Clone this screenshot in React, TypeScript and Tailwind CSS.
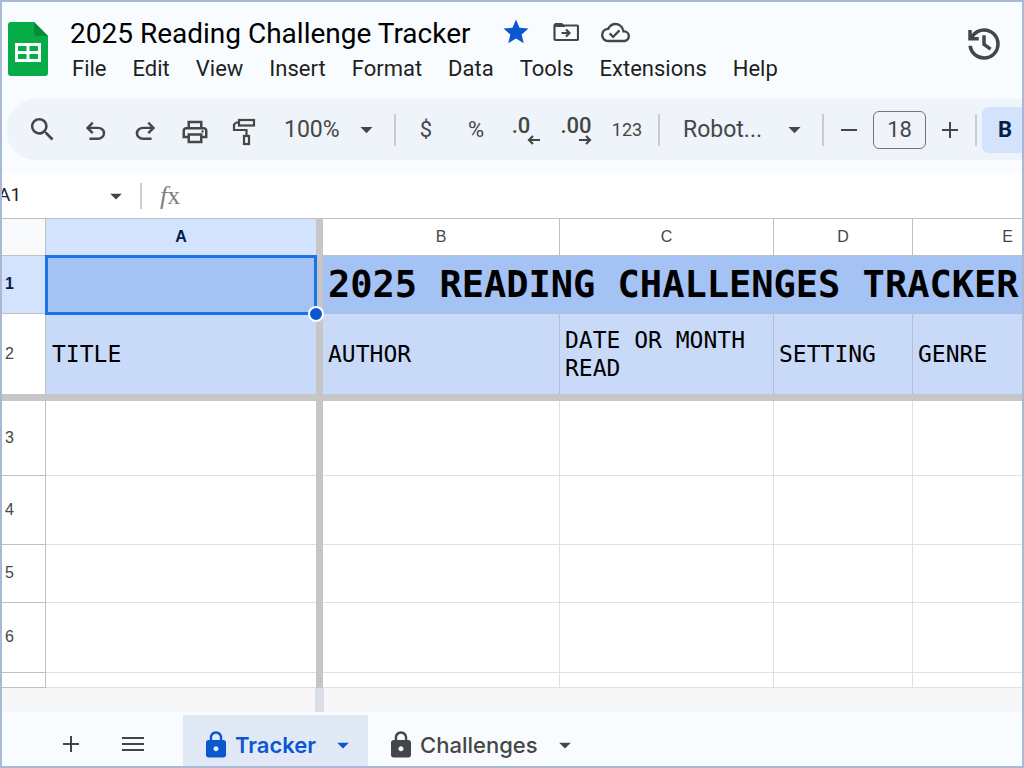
import React from 'react';
import clsx from 'clsx';
import {
  MdArrowDropDown,
  MdLock,
  MdOutlineCloudDone,
  MdSearch,
  MdStar,
} from 'react-icons/md';

const MENUS = ['File', 'Edit', 'View', 'Insert', 'Format', 'Data', 'Tools', 'Extensions', 'Help'];

const EMPTY_ROWS = [
  { label: '3', height: 'h-[75px]' },
  { label: '4', height: 'h-[69px]' },
  { label: '5', height: 'h-[58px]' },
  { label: '6', height: 'h-[70px]' },
  { label: '', height: 'h-[15px]' },
];

const SYMBOLS = {
  undo: 'M280-200v-80h284q63 0 109.500-40T720-420q0-60-46.500-100T564-560H312l104 104-56 56-200-200 200-200 56 56-104 104h252q97 0 169.500 63T800-420q0 94-72.500 157T564-200H280Z',
  redo: 'M396-200q-97 0-169.500-63T154-420q0-94 72.500-157T396-640h252L544-744l56-56 200 200-200 200-56-56 104-104H396q-63 0-109.500 40T240-420q0 60 46.500 100T396-280h284v80H396Z',
  print:
    'M640-640v-120H320v120h-80v-200h480v200h-80Zm80 180q17 0 28.500-11.500T760-500q0-17-11.500-28.500T720-540q-17 0-28.500 11.500T680-500q0 17 11.500 28.500T720-460Zm-80 260v-160H320v160h320Zm80 80H240v-160H80v-240q0-51 35-85.500t85-34.500h560q51 0 85.500 34.500T880-520v240H720v160Zm80-240v-160q0-17-11.500-28.500T760-560H200q-17 0-28.500 11.500T160-520v160h80v-80h480v80h80Z',
  history:
    'M480-120q-138 0-240.500-91.500T122-440h82q14 104 92.500 172T480-200q117 0 198.500-81.500T760-480q0-117-81.500-198.500T480-760q-69 0-129 32t-101 88h110v80H120v-240h80v94q51-64 124.500-99T480-840q75 0 140.500 28.500t114 77q48.500 48.500 77 114T840-480q0 75-28.500 140.500t-77 114q-48.500 48.500-114 77T480-120ZM608-330L440-450v-230h80v190l134 96-46 64Z',
};

const Symbol: React.FC<{ name: keyof typeof SYMBOLS; size: number }> = ({ name, size }) => (
  <svg width={size} height={size} viewBox="0 -960 960 960" fill="currentColor" aria-hidden="true">
    <path d={SYMBOLS[name]} />
  </svg>
);

const SheetsLogo: React.FC = () => (
  <svg width="40" height="54" viewBox="0 0 40 54" aria-hidden="true">
    <path d="M3 0h23l14 14v37a3 3 0 0 1-3 3H3a3 3 0 0 1-3-3V3a3 3 0 0 1 3-3z" fill="#06ac47" />
    <path d="M26 0l14 14H29a3 3 0 0 1-3-3z" fill="#078a38" />
    <path
      d="M7 21h26v19H7zM10 24v5h8.500v-5zM21.500 24v5H30v-5zM10 32v5h8.500v-5zM21.500 32v5H30v-5z"
      fill="#fff"
      fillRule="evenodd"
    />
  </svg>
);

const MoveIcon: React.FC = () => (
  <svg width="26" height="20" viewBox="0 0 26 20" fill="none" stroke="currentColor" strokeWidth="2.2" aria-hidden="true">
    <path d="M2 3.500h22a1 1 0 0 1 1 1V17a1 1 0 0 1-1 1H2.500a1 1 0 0 1-1-1V3.500z" />
    <path d="M1 5V2.500A1.500 1.500 0 0 1 2.500 1H9l3 3v1z" fill="currentColor" stroke="none" />
    <path d="M8.500 11h8M13 7.500l3.500 3.500-3.500 3.500" />
  </svg>
);

const PaintIcon: React.FC = () => (
  <svg width="24" height="28" viewBox="0 0 24 28" fill="none" stroke="currentColor" strokeWidth="2.2" aria-hidden="true">
    <rect x="7" y="2" width="15" height="5.500" />
    <path d="M7 4.500H4.500L2 6.500V12h12.500v6" />
    <rect x="12" y="18" width="5" height="8" />
  </svg>
);

const PlusIcon: React.FC<{ size: number }> = ({ size }) => (
  <svg width={size} height={size} viewBox="0 0 16 16" stroke="currentColor" strokeWidth="2" aria-hidden="true">
    <path d="M0 8h16M8 0v16" />
  </svg>
);

const DecimalIcon: React.FC<{ digits: string; right?: boolean }> = ({ digits, right }) => (
  <span className="flex flex-col items-end pt-[2px]">
    <span className={clsx('text-[22px] leading-[18px] font-medium', !right && 'pr-2.5')}>{digits}</span>
    <svg width="13" height="10" viewBox="0 0 13 10" fill="none" stroke="currentColor" strokeWidth="2.2" aria-hidden="true">
      <path d={right ? 'M0 5h11M7 1l4 4-4 4' : 'M13 5H2M6 1L2 5l4 4'} />
    </svg>
  </span>
);

const Divider: React.FC = () => <div className="mx-[5px] h-8 w-[2px] shrink-0 bg-[#c9cdd2]" />;

const ToolButton: React.FC<{ label: string; className?: string; children: React.ReactNode }> = ({
  label,
  className = 'w-[50px]',
  children,
}) => (
  <button type="button" aria-label={label} className={clsx('flex h-11 shrink-0 items-center justify-center', className)}>
    {children}
  </button>
);

const ToolSelect: React.FC<{ label: string; value: string; className: string }> = ({ label, value, className }) => (
  <div className={clsx('relative flex h-11 shrink-0 items-center text-[23px]', className)}>
    <select aria-label={label} className="h-full w-full appearance-none bg-transparent pt-[2px] pl-4">
      <option>{value}</option>
    </select>
    <MdArrowDropDown size={29} className="pointer-events-none absolute right-2" />
  </div>
);

const Header: React.FC = () => (
  <header className="flex items-start gap-[22px] pt-[15px] pr-[17px] pl-[6px]">
    <div className="pt-[5px]">
      <SheetsLogo />
    </div>
    <div className="flex-1">
      <div className="flex h-[34px] items-center gap-[30px]">
        <h1 className="text-[28px] leading-[34px] text-black">2025 Reading Challenge Tracker</h1>
        <div className="flex items-center gap-[22px] pb-1 text-[#444746]">
          <button type="button" aria-label="Star" className="text-[#0b57d0]">
            <MdStar size={30} />
          </button>
          <button type="button" aria-label="Move">
            <MoveIcon />
          </button>
          <button type="button" aria-label="Document status">
            <MdOutlineCloudDone size={29} />
          </button>
        </div>
      </div>
      <nav className="flex gap-[26px] pl-[2px] text-[22px] leading-[36px] text-[#1f1f1f]">
        {MENUS.map((menu) => (
          <button key={menu} type="button">
            {menu}
          </button>
        ))}
      </nav>
    </div>
    <button type="button" aria-label="Version history" className="pt-[6px] text-[#444746]">
      <Symbol name="history" size={42} />
    </button>
  </header>
);

const Toolbar: React.FC = () => (
  <div className="mt-3 ml-1 flex h-[61px] items-center overflow-hidden rounded-l-full bg-[#eff3fa] pl-[11px] text-[22px] text-[#444746]">
    <ToolButton label="Search" className="mr-[3px] w-[50px]">
      <MdSearch size={31} />
    </ToolButton>
    <ToolButton label="Undo" className="w-[50px] pt-1">
      <Symbol name="undo" size={29} />
    </ToolButton>
    <ToolButton label="Redo" className="w-[50px] pt-1">
      <Symbol name="redo" size={29} />
    </ToolButton>
    <ToolButton label="Print" className="w-[50px] pt-1">
      <Symbol name="print" size={30} />
    </ToolButton>
    <ToolButton label="Paint format" className="w-[48px] pt-1">
      <PaintIcon />
    </ToolButton>
    <ToolSelect label="Zoom" value="100%" className="w-[121px]" />
    <Divider />
    <ToolButton label="Format as currency">$</ToolButton>
    <ToolButton label="Format as percent">%</ToolButton>
    <ToolButton label="Decrease decimal places">
      <DecimalIcon digits=".0" />
    </ToolButton>
    <ToolButton label="Increase decimal places">
      <DecimalIcon digits=".00" right />
    </ToolButton>
    <ToolButton label="More formats" className="w-[52px] text-[18px]">
      123
    </ToolButton>
    <Divider />
    <ToolSelect label="Font" value="Robot..." className="w-[152px] pl-[2px]" />
    <Divider />
    <ToolButton label="Decrease font size" className="w-[40px]">
      <span className="h-[2px] w-4 bg-current" />
    </ToolButton>
    <input
      aria-label="Font size"
      defaultValue="18"
      className="mx-1 h-[38px] w-[53px] shrink-0 rounded-md border border-[#747775] text-center text-[22px]"
    />
    <ToolButton label="Increase font size" className="w-[40px]">
      <PlusIcon size={16} />
    </ToolButton>
    <Divider />
    <button
      type="button"
      aria-label="Bold"
      className="h-[46px] w-[46px] shrink-0 rounded-md bg-[#d3e3fd] font-bold text-[#041e49]"
    >
      B
    </button>
  </div>
);

const FormulaBar: React.FC = () => (
  <div className="mt-[13px] -ml-1 flex h-[45px] items-center bg-white">
    <input aria-label="Name box" defaultValue="A1" className="w-[104px] bg-transparent text-[19px] text-[#1f1f1f]" />
    <button type="button" aria-label="Named ranges" className="text-[#444746]">
      <MdArrowDropDown size={28} />
    </button>
    <div className="mr-[18px] ml-[10px] h-[26px] w-[2px] bg-[#c9cdd2]" />
    <label htmlFor="formula" className="font-['Liberation_Serif',serif] text-[26px] leading-[30px] text-[#808080]">
      <i>f</i>x
    </label>
    <input id="formula" className="ml-4 flex-1 bg-transparent text-[18px] outline-none" />
  </div>
);

const COL_HEAD = 'h-[38px] border-t border-r border-b border-[#c0c0c0] text-center';
const ROW_HEAD = 'border-r border-b border-[#c0c0c0] pl-[3px] pb-px text-left font-normal';
const LABEL_CELL = 'border-r border-[#b3c0dc] bg-[#c9daf8] pl-[5px] pb-px';
const BLANK_CELL = 'border-r border-b border-[#e0e0e0]';

const Sheet: React.FC = () => (
  <div className="overflow-hidden bg-white">
    <table className="w-[1101px] min-w-full table-fixed border-separate border-spacing-0 font-['Liberation_Sans',sans-serif] text-[16px] text-[#444746]">
      <colgroup>
        <col className="w-[44px]" />
        <col className="w-[270px]" />
        <col className="w-[7px]" />
        <col className="w-[237px]" />
        <col className="w-[214px]" />
        <col className="w-[139px]" />
        <col />
      </colgroup>
      <thead>
        <tr className="leading-[20px]">
          <td className={clsx(COL_HEAD, 'bg-[#f8f9fa]')} />
          <th className="h-[38px] border-t border-b border-[#c0c0c0] bg-[#d3e3fd] text-center font-bold text-[#041e49]">A</th>
          <td className="bg-[#c6c6c6]" />
          {['B', 'C', 'D', 'E'].map((col) => (
            <th key={col} className={clsx(COL_HEAD, 'font-normal')}>
              {col}
            </th>
          ))}
        </tr>
      </thead>
      <tbody>
        <tr>
          <th className={clsx(ROW_HEAD, 'h-[58px] bg-[#d3e3fd] !font-bold text-[#041e49]')}>1</th>
          <td className="relative bg-[#a4c2f4]">
            <div className="absolute -inset-px border-[3px] border-[#1a73e8]" />
            <div className="absolute -right-2 -bottom-2 z-10 size-4 rounded-full border-2 border-white bg-[#0b57d0]" />
          </td>
          <td className="bg-[#c6c6c6]" />
          <td
            colSpan={4}
            className="border-b border-[#b3c0dc] bg-[#a4c2f4] pl-[5px] font-['DejaVu_Sans_Mono',monospace] text-[37px] leading-[44px] font-bold whitespace-nowrap text-black"
          >
            2025 READING CHALLENGES TRACKER
          </td>
        </tr>
        <tr className="font-['DejaVu_Sans_Mono',monospace] text-[23px] leading-[28px] text-black">
          <th className="h-[80px] border-r border-[#c0c0c0] pl-[3px] text-left font-['Liberation_Sans',sans-serif] text-[16px] font-normal text-[#444746]">
            2
          </th>
          <td className="bg-[#c9daf8] pb-px pl-[6px]">TITLE</td>
          <td className="bg-[#c6c6c6]" />
          <td className={LABEL_CELL}>AUTHOR</td>
          <td className={LABEL_CELL}>DATE OR MONTH READ</td>
          <td className={LABEL_CELL}>SETTING</td>
          <td className={LABEL_CELL}>GENRE</td>
        </tr>
        <tr>
          <td colSpan={7} className="h-[7px] bg-[#c6c6c6] p-0" />
        </tr>
        {EMPTY_ROWS.map((row, i) => (
          <tr key={i}>
            <th className={clsx(ROW_HEAD, row.height)}>{row.label}</th>
            <td className="border-b border-[#e0e0e0]" />
            <td className="bg-[#c6c6c6]" />
            <td className={BLANK_CELL} />
            <td className={BLANK_CELL} />
            <td className={BLANK_CELL} />
            <td className={BLANK_CELL} />
          </tr>
        ))}
      </tbody>
    </table>
    <div className="flex h-6 bg-[#f7f7f7]">
      <div className="ml-[313px] w-[9px] bg-[#dadfe7]" />
    </div>
  </div>
);

const SheetTab: React.FC<{ name: string; active?: boolean }> = ({ name, active }) => (
  <button
    type="button"
    className={clsx(
      "mt-[3px] flex items-center pt-2 pr-[11px] pl-[18px] font-['Inter','Roboto',sans-serif] text-[22px] leading-[28px]",
      active ? 'bg-[#e1e9f7] font-semibold text-[#0b57d0]' : 'font-medium text-[#444746]',
    )}
  >
    <MdLock size={30} className="mr-1" />
    {name}
    <MdArrowDropDown size={28} className="ml-[13px]" />
  </button>
);

export default function App() {
  return (
    <div className="flex min-h-screen flex-col overflow-hidden border-2 border-[#a9b8d5] bg-[#f9fcff] font-['Roboto','Liberation_Sans',sans-serif]">
      <Header />
      <Toolbar />
      <FormulaBar />
      <Sheet />
      <footer className="flex min-h-[54px] flex-1 text-[#444746]">
        <button type="button" aria-label="Add sheet" className="ml-[44px] w-[50px] pt-[10px] pl-[17px]">
          <PlusIcon size={16} />
        </button>
        <button type="button" aria-label="All sheets" className="mr-[35px] flex w-[52px] flex-col items-center justify-center gap-1 pt-[10px] pl-[22px]">
          <span className="h-[2px] w-[22px] bg-current" />
          <span className="h-[2px] w-[22px] bg-current" />
          <span className="h-[2px] w-[22px] bg-current" />
        </button>
        <SheetTab name="Tracker" active />
        <SheetTab name="Challenges" />
      </footer>
    </div>
  );
}
